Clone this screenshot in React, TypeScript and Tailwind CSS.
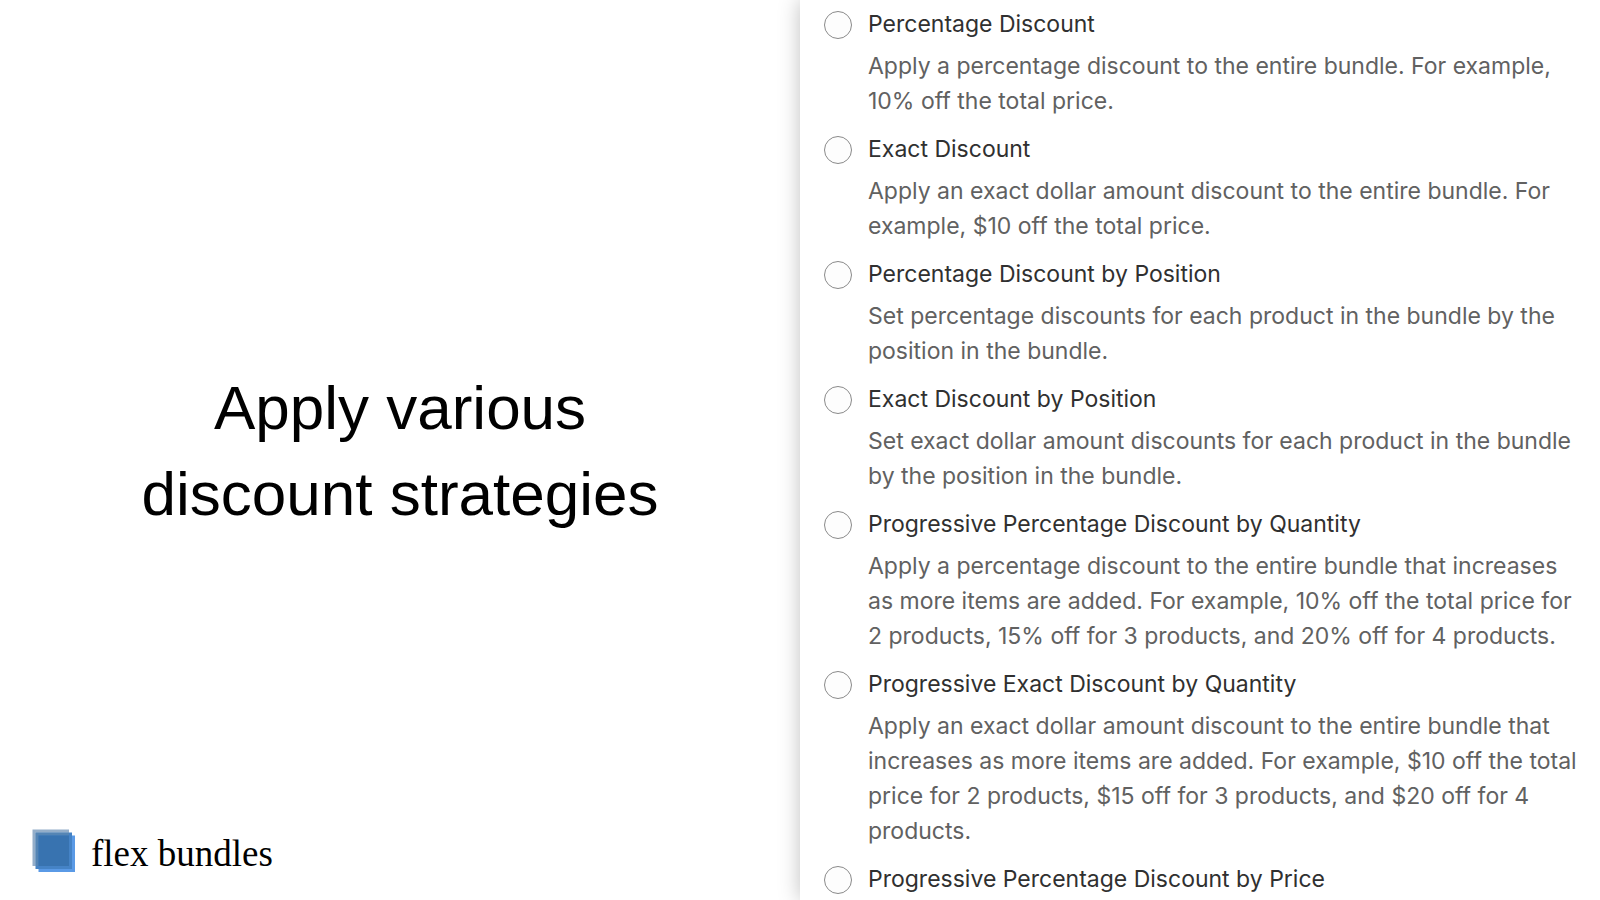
import React from "react";

interface Strategy {
  id: string;
  title: string;
  description?: string;
}

const strategies: Strategy[] = [
  {
    id: "percentage",
    title: "Percentage Discount",
    description:
      "Apply a percentage discount to the entire bundle. For example, 10% off the total price.",
  },
  {
    id: "exact",
    title: "Exact Discount",
    description:
      "Apply an exact dollar amount discount to the entire bundle. For example, $10 off the total price.",
  },
  {
    id: "percentage-position",
    title: "Percentage Discount by Position",
    description:
      "Set percentage discounts for each product in the bundle by the position in the bundle.",
  },
  {
    id: "exact-position",
    title: "Exact Discount by Position",
    description:
      "Set exact dollar amount discounts for each product in the bundle by the position in the bundle.",
  },
  {
    id: "progressive-percentage-quantity",
    title: "Progressive Percentage Discount by Quantity",
    description:
      "Apply a percentage discount to the entire bundle that increases as more items are added. For example, 10% off the total price for 2 products, 15% off for 3 products, and 20% off for 4 products.",
  },
  {
    id: "progressive-exact-quantity",
    title: "Progressive Exact Discount by Quantity",
    description:
      "Apply an exact dollar amount discount to the entire bundle that increases as more items are added. For example, $10 off the total price for 2 products, $15 off for 3 products, and $20 off for 4 products.",
  },
  {
    id: "progressive-percentage-price",
    title: "Progressive Percentage Discount by Price",
  },
];

const Logo: React.FC = () => (
  <div className="flex items-end gap-4">
    <svg width="43" height="43" viewBox="0 0 43 43" aria-hidden="true">
      <rect x="6.5" y="6.5" width="36.5" height="36.5" fill="#5a9ae6" />
      <rect x="3.5" y="3.5" width="36.5" height="36.5" fill="#4583c6" />
      <path d="M0.5 0.5H37V3.5H3.5V37H0.5Z" fill="#94aec9" />
      <path d="M3.5 3.5H37V6.5H6.5V37H3.5Z" fill="#5585b4" />
      <rect x="6.5" y="6.5" width="30.5" height="30.5" fill="#3873b0" />
    </svg>
    <span className="font-['Liberation_Serif',serif] text-[37px] leading-[37px] text-black">
      flex bundles
    </span>
  </div>
);

const StrategyOption: React.FC<{ strategy: Strategy }> = ({ strategy }) => (
  <div className="flex items-start gap-4">
    <div className="flex h-[35px] shrink-0 items-center">
      <input
        type="radio"
        id={strategy.id}
        name="strategy"
        className="size-7 appearance-none rounded-full border border-[#8a8a8a] bg-[#fdfdfd] checked:border-8 checked:border-[#303030]"
      />
    </div>
    <div className="flex flex-col gap-[7px]">
      <label htmlFor={strategy.id} className="text-[#303030]">
        {strategy.title}
      </label>
      {strategy.description && (
        <p className="text-[#616161]">{strategy.description}</p>
      )}
    </div>
  </div>
);

const App: React.FC = () => {
  return (
    <div className="grid min-h-screen grid-cols-2 bg-white">
      <section className="grid grid-rows-[1fr_auto_1fr] pt-0.5">
        <h1 className="row-start-2 px-20 text-center font-['Liberation_Sans',sans-serif] text-[62px] leading-[86px] text-black">
          Apply various
          <br />
          discount strategies
        </h1>
        <div className="row-start-3 self-end px-8 pb-7">
          <Logo />
        </div>
      </section>
      <form className="flex flex-col gap-[13px] bg-white pt-[7px] pr-4 pl-6 font-['Inter',sans-serif] text-[23px] leading-[35px] font-normal shadow-[0_0_20px_rgba(0,0,0,0.25)]">
        {strategies.map((strategy) => (
          <StrategyOption key={strategy.id} strategy={strategy} />
        ))}
      </form>
    </div>
  );
};

export default App;
